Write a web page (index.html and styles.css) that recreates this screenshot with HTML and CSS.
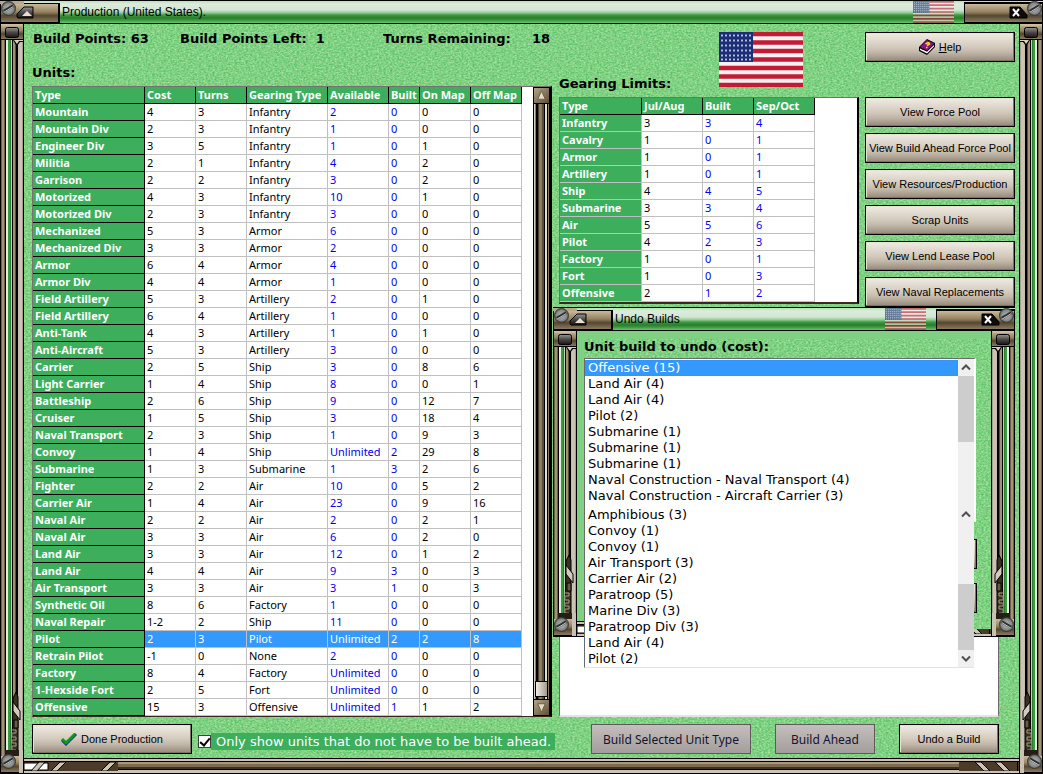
FILE: index.html
```html
<!DOCTYPE html>
<html lang="en">
<head>
  <meta charset="UTF-8">
  <meta name="viewport" content="width=device-width, initial-scale=1">
  <title>Production (United States).</title>
  <link rel="stylesheet" href="styles.css">
</head>
<body>

  <!-- shared shapes -->
  <svg class="defs" aria-hidden="true">
    <defs>
      <filter id="grain" x="0" y="0" width="100%" height="100%" color-interpolation-filters="sRGB">
        <feTurbulence type="fractalNoise" baseFrequency="0.45 0.6" numOctaves="2" seed="4"/>
        <feColorMatrix values="0.5 0 0 0 0.25  0.22 0 0 0 0.71  0.42 0 0 0 0.3  0 0 0 0 1"/>
      </filter>
      <linearGradient id="metal" x1="0" y1="0" x2="0" y2="1">
        <stop offset="0" stop-color="#c9b99c"/>
        <stop offset="0.45" stop-color="#93815f"/>
        <stop offset="0.65" stop-color="#55462f"/>
        <stop offset="1" stop-color="#8a7a5e"/>
      </linearGradient>
      <linearGradient id="knob" x1="0" y1="0" x2="0" y2="1">
        <stop offset="0" stop-color="#9a9794"/>
        <stop offset="0.5" stop-color="#4b4748"/>
        <stop offset="1" stop-color="#171415"/>
      </linearGradient>
      <radialGradient id="steel">
        <stop offset="0" stop-color="#b5b8b8"/>
        <stop offset="0.75" stop-color="#84898a"/>
        <stop offset="1" stop-color="#4a4a45"/>
      </radialGradient>
      <symbol id="screw" viewBox="0 0 16 16">
        <circle cx="8" cy="8" r="7.5" fill="url(#steel)" stroke="#3d3a33"/>
        <path d="M3 11L13 5" stroke="#2d2d2d" stroke-width="3"/>
        <path d="M3 12L13 6" stroke="#d5d8d8"/>
      </symbol>
      <symbol id="cap-left" viewBox="0 0 60 24">
        <rect x="0" y="3" width="60" height="20" fill="#000"/>
        <rect x="1" y="4" width="57" height="18" fill="url(#metal)"/>
        <rect x="0" y="1" width="24" height="3" fill="#b9a98c"/>
        <path d="M17 17V14L24 7H33V18H18Z" fill="url(#knob)" stroke="#000"/>
        <path d="M22 16L27 11L32 16Z" fill="#e8e0cf"/>
        <use href="#screw" x="1" y="1" width="15" height="15"/>
      </symbol>
      <symbol id="cap-right" viewBox="0 0 79 24">
        <rect x="0" y="2" width="79" height="21" fill="#000"/>
        <rect x="1" y="4" width="77" height="18" fill="url(#metal)"/>
        <path d="M46 7H56L63 15V18H46Z" fill="#0d0b0b" stroke="#000"/>
        <path d="M49 9L55 16M55 9L49 16" stroke="#fff" stroke-width="2"/>
        <use href="#screw" x="63" y="1" width="15" height="15"/>
      </symbol>
      <symbol id="shoulder" viewBox="0 0 24 50">
        <rect width="24" height="16" fill="#000"/>
        <rect x="1" width="22" height="15" fill="url(#metal)"/>
        <path d="M1 1H22" stroke="#d3c6ad"/>
        <rect x="5.5" y="3.500" width="13" height="10" rx="2" fill="url(#knob)" stroke="#000"/>
        <path d="M13 16H24V18H20L17 22V50H16V21Z" fill="#000"/>
        <path d="M14 16H23V17H19L17 20Z" fill="#d8cfc2"/>
      </symbol>
      <symbol id="foot" viewBox="0 0 24 94">
        <path d="M13 18L16 12L18 17V32V70H12Z" fill="#3a3021" stroke="#000"/>
        <path d="M13 22L20 31V40L13 31Z" fill="#d3cabd" stroke="#000"/>
        <path d="M14 40H18V48H14Z" fill="#6b5a3f" stroke="#000"/>
        <path d="M12 50H16V53H12V57H16V60H12V63H16V66H12V70H16" fill="none" stroke="#a99a80"/>
        <rect x="5" y="70" width="14" height="6" fill="#241e16"/>
        <rect x="0" y="76" width="24" height="18" fill="#000"/>
        <rect x="1" y="76" width="18" height="16" fill="url(#metal)"/>
        <rect x="19" y="70" width="4" height="23" fill="#c9c0b3"/>
        <use href="#screw" x="1" y="74" width="15" height="15"/>
      </symbol>
      <symbol id="struts" viewBox="0 0 60 9">
        <rect width="60" height="9" fill="#4a3c28"/>
        <path d="M16 0H22L31 9H25ZM36 0H42L51 9H45Z" fill="#cfc5b7" stroke="#000"/>
        <path d="M58.5 0V9" stroke="#000"/>
      </symbol>
      <symbol id="struts-left" viewBox="0 0 94 9">
        <rect width="94" height="9" fill="#4a3c28"/>
        <path d="M0 1H24V8H0Z" fill="#fff" stroke="#000"/>
        <path d="M15 0H21L13 9H7ZM36 0H42L33 9H27ZM86 0H92L83 9H77Z" fill="#cfc5b7" stroke="#000"/>
      </symbol>
      <symbol id="stars" viewBox="0 0 34 30">
        <rect width="34" height="30" fill="#1d2f74"/>
        <path d="M2 3.500H33M2 8.500H33M2 13.500H33M2 18.500H33M2 23.500H33M2 27.500H33" stroke="#aeb8d8" stroke-width="2" stroke-dasharray="2 2"/>
      </symbol>
      <symbol id="flag" viewBox="0 0 84 55" preserveAspectRatio="none">
        <rect width="84" height="55" fill="#f6f1f2"/>
        <path d="M0 2H84M0 10.500H84M0 19H84M0 27.500H84M0 36H84M0 44.500H84M0 53H84" stroke="#c21b33" stroke-width="4.300"/>
        <use href="#stars" width="34" height="30"/>
      </symbol>
    </defs>
  </svg>

  <main class="window main-window">
    <header class="titlebar">
      <svg class="cap-left"><use href="#cap-left"/></svg>
      <span class="title">Production (United States).</span>
      <svg class="title-flag"><use href="#flag"/></svg>
      <svg class="cap-right"><use href="#cap-right"/></svg>
    </header>
    <div class="rail rail-left">
      <svg class="shoulder"><use href="#shoulder"/></svg>
      <svg class="foot"><use href="#foot"/></svg>
    </div>

    <div class="client">
      <svg class="texture" aria-hidden="true"><rect width="100%" height="100%" filter="url(#grain)"/></svg>

      <div class="panes">
        <section class="left-pane">
          <div class="stats">
            <span class="stat-points">Build Points: 63</span>
            <span class="stat-left">Build Points Left:&nbsp; 1</span>
            <span class="stat-turns">Turns Remaining:</span>
            <span>18</span>
          </div>
          <h2>Units:</h2>
          <div class="grid-box units-box">
            <table class="units">
              <thead>
                <tr>
                  <th class="w-type">Type</th><th class="w-mid">Cost</th><th class="w-mid">Turns</th><th class="w-gear">Gearing Type</th>
                  <th class="w-avail">Available</th><th class="w-built">Built</th><th class="w-mid">On Map</th><th class="w-mid">Off Map</th>
                </tr>
              </thead>
              <tbody id="units-body"></tbody>
            </table>
            <div class="scroller">
              <button class="scroll-btn"><svg viewBox="0 0 16 16"><path d="M8 3L12 12H4Z" fill="#e3dac4" stroke="#6b5d43"/></svg></button>
              <div class="scroll-track"><div class="scroll-thumb"></div></div>
              <button class="scroll-btn"><svg viewBox="0 0 16 16"><path d="M8 13L12 4H4Z" fill="#e3dac4" stroke="#6b5d43"/></svg></button>
            </div>
          </div>
        </section>

        <section class="right-pane">
          <div class="right-top">
            <div class="gearing">
              <div class="gearing-head">
                <h2>Gearing Limits:</h2>
                <svg class="big-flag"><use href="#flag"/></svg>
              </div>
              <div class="grid-box gearing-box">
                <table class="limits">
                  <thead>
                    <tr><th class="w-name">Type</th><th class="w-month">Jul/Aug</th><th class="w-mid">Built</th><th class="w-month">Sep/Oct</th></tr>
                  </thead>
                  <tbody id="limits-body"></tbody>
                </table>
              </div>
            </div>
            <nav class="actions">
              <button class="btn help-btn">
                <svg class="book" viewBox="0 0 16 16">
                  <path d="M0 8L8 0L16 4V8L8 16L0 12Z" fill="#000"/>
                  <path d="M1 8L8 1L15 4.500L8 11.500Z" fill="#8b128b"/>
                  <path d="M1 9.500L8 12.800L15 6V7.500L8 14.500L1 11Z" fill="#fff"/>
                  <path d="M6.500 5Q10 2.500 10.500 5L8 6.500M7 8.500H8.500" fill="none" stroke="#ffe600" stroke-width="1.500"/>
                </svg>
                <span><u>H</u>elp</span>
              </button>
              <button class="btn">View Force Pool</button>
              <button class="btn">View Build Ahead Force Pool</button>
              <button class="btn">View Resources/Production</button>
              <button class="btn">Scrap Units</button>
              <button class="btn">View Lend Lease Pool</button>
              <button class="btn">View Naval Replacements</button>
            </nav>
          </div>
          <div class="memo"></div>
        </section>
      </div>

      <footer class="bottom-bar">
        <button class="btn done-btn">
          <svg class="tick" viewBox="0 0 16 16">
            <path d="M1 9L5 13L15 3" fill="none" stroke="#1414c8" stroke-width="3"/>
            <path d="M1 8L5 12L14 3" fill="none" stroke="#0c9a14" stroke-width="3"/>
          </svg>
          <span>Done Production</span>
        </button>
        <label class="ahead-only"><input type="checkbox" checked><span>Only show units that do not have to be built ahead.</span></label>
        <button class="btn build-btn" disabled>Build Selected Unit Type</button>
        <button class="btn ahead-btn" disabled>Build Ahead</button>
        <button class="btn undo-btn">Undo a Build</button>
      </footer>

      <!-- floating Undo Builds window -->
      <section class="window undo-window">
        <header class="titlebar">
          <svg class="cap-left"><use href="#cap-left"/></svg>
          <span class="title">Undo Builds</span>
          <svg class="title-flag"><use href="#flag"/></svg>
          <svg class="cap-right"><use href="#cap-right"/></svg>
        </header>
        <div class="rail rail-left">
          <svg class="shoulder"><use href="#shoulder"/></svg>
          <svg class="foot"><use href="#foot"/></svg>
        </div>
        <div class="client undo-client">
          <svg class="texture" aria-hidden="true"><rect width="100%" height="100%" filter="url(#grain)"/></svg>
          <h2><label for="undo-list">Unit build to undo (cost):</label></h2>
          <div class="list-box">
            <select id="undo-list" size="10">
              <option selected>Offensive (15)</option>
              <option>Land Air (4)</option>
              <option>Land Air (4)</option>
              <option>Pilot (2)</option>
              <option>Submarine (1)</option>
              <option>Submarine (1)</option>
              <option>Submarine (1)</option>
              <option>Naval Construction - Naval Transport (4)</option>
              <option>Naval Construction - Aircraft Carrier (3)</option>
            </select>
            <div class="list-scroll">
              <svg viewBox="0 0 16 16"><path d="M4 10L8 6L12 10" fill="none" stroke="#505050" stroke-width="2"/></svg>
              <div class="list-thumb"></div>
            </div>
          </div>
          <button class="btn"></button>
          <button class="btn"></button>
        </div>
        <div class="rail rail-right">
          <svg class="shoulder"><use href="#shoulder"/></svg>
          <svg class="foot"><use href="#foot"/></svg>
        </div>
        <div class="sill">
          <svg class="struts-left"><use href="#struts-left"/></svg>
          <svg class="struts"><use href="#struts"/></svg>
        </div>

        <div class="list-box list-more">
          <select size="10" aria-labelledby="undo-list">
            <option>Amphibious (3)</option>
            <option>Convoy (1)</option>
            <option>Convoy (1)</option>
            <option>Air Transport (3)</option>
            <option>Carrier Air (2)</option>
            <option>Paratroop (5)</option>
            <option>Marine Div (3)</option>
            <option>Paratroop Div (3)</option>
            <option>Land Air (4)</option>
            <option>Pilot (2)</option>
          </select>
          <div class="list-scroll">
            <svg viewBox="0 0 16 16"><path d="M4 10L8 6L12 10" fill="none" stroke="#505050" stroke-width="2"/></svg>
            <div class="list-gap"></div>
            <div class="list-thumb"></div>
            <svg viewBox="0 0 16 16"><path d="M4 6L8 10L12 6" fill="none" stroke="#505050" stroke-width="2"/></svg>
          </div>
        </div>
      </section>
    </div>

    <div class="rail rail-right">
      <svg class="shoulder"><use href="#shoulder"/></svg>
      <svg class="foot"><use href="#foot"/></svg>
    </div>
    <div class="sill">
      <svg class="struts-left"><use href="#struts-left"/></svg>
      <svg class="struts"><use href="#struts"/></svg>
    </div>
  </main>

  <script>
    // type, cost, turns, gearing type, available, built, on map, off map
    const units = [
      ["Mountain", 4, 3, "Infantry", 2, 0, 0, 0],
      ["Mountain Div", 2, 3, "Infantry", 1, 0, 0, 0],
      ["Engineer Div", 3, 5, "Infantry", 1, 0, 1, 0],
      ["Militia", 2, 1, "Infantry", 4, 0, 2, 0],
      ["Garrison", 2, 2, "Infantry", 3, 0, 2, 0],
      ["Motorized", 4, 3, "Infantry", 10, 0, 1, 0],
      ["Motorized Div", 2, 3, "Infantry", 3, 0, 0, 0],
      ["Mechanized", 5, 3, "Armor", 6, 0, 0, 0],
      ["Mechanized Div", 3, 3, "Armor", 2, 0, 0, 0],
      ["Armor", 6, 4, "Armor", 4, 0, 0, 0],
      ["Armor Div", 4, 4, "Armor", 1, 0, 0, 0],
      ["Field Artillery", 5, 3, "Artillery", 2, 0, 1, 0],
      ["Field Artillery", 6, 4, "Artillery", 1, 0, 0, 0],
      ["Anti-Tank", 4, 3, "Artillery", 1, 0, 1, 0],
      ["Anti-Aircraft", 5, 3, "Artillery", 3, 0, 0, 0],
      ["Carrier", 2, 5, "Ship", 3, 0, 8, 6],
      ["Light Carrier", 1, 4, "Ship", 8, 0, 0, 1],
      ["Battleship", 2, 6, "Ship", 9, 0, 12, 7],
      ["Cruiser", 1, 5, "Ship", 3, 0, 18, 4],
      ["Naval Transport", 2, 3, "Ship", 1, 0, 9, 3],
      ["Convoy", 1, 4, "Ship", "Unlimited", 2, 29, 8],
      ["Submarine", 1, 3, "Submarine", 1, 3, 2, 6],
      ["Fighter", 2, 2, "Air", 10, 0, 5, 2],
      ["Carrier Air", 1, 4, "Air", 23, 0, 9, 16],
      ["Naval Air", 2, 2, "Air", 2, 0, 2, 1],
      ["Naval Air", 3, 3, "Air", 6, 0, 2, 0],
      ["Land Air", 3, 3, "Air", 12, 0, 1, 2],
      ["Land Air", 4, 4, "Air", 9, 3, 0, 3],
      ["Air Transport", 3, 3, "Air", 3, 1, 0, 3],
      ["Synthetic Oil", 8, 6, "Factory", 1, 0, 0, 0],
      ["Naval Repair", "1-2", 2, "Ship", 11, 0, 0, 0],
      ["Pilot", 2, 3, "Pilot", "Unlimited", 2, 2, 8],
      ["Retrain Pilot", -1, 0, "None", 2, 0, 0, 0],
      ["Factory", 8, 4, "Factory", "Unlimited", 0, 0, 0],
      ["1-Hexside Fort", 2, 5, "Fort", "Unlimited", 0, 0, 0],
      ["Offensive", 15, 3, "Offensive", "Unlimited", 1, 1, 2]
    ];

    // type, this turn, built, next turn
    const limits = [
      ["Infantry", 3, 3, 4],
      ["Cavalry", 1, 0, 1],
      ["Armor", 1, 0, 1],
      ["Artillery", 1, 0, 1],
      ["Ship", 4, 4, 5],
      ["Submarine", 3, 3, 4],
      ["Air", 5, 5, 6],
      ["Pilot", 4, 2, 3],
      ["Factory", 1, 0, 1],
      ["Fort", 1, 0, 3],
      ["Offensive", 2, 1, 2]
    ];

    function fill(id, rows, blueCols, selected) {
      document.getElementById(id).innerHTML = rows.map((row, r) => {
        const cells = row.map((value, c) => {
          if (c === 0) return `<th scope="row">${value}</th>`;
          return `<td${blueCols.includes(c) ? ' class="blue"' : ''}>${value}</td>`;
        });
        return `<tr${r === selected ? ' class="selected"' : ''}>${cells.join("")}</tr>`;
      }).join("");
    }

    fill("units-body", units, [4, 5], 31);
    fill("limits-body", limits, [2, 3], -1);
  </script>

</body>
</html>
```

FILE: styles.css
```css
* {
  box-sizing: border-box;
}

body {
  margin: 0;
  font-family: "DejaVu Sans", Verdana, sans-serif;
  font-size: 13px;
  color: #000;
  background: #7fd083;
}

.defs {
  position: absolute;
  width: 0;
  height: 0;
}

/* window frame */
.window {
  display: grid;
  grid-template-columns: 24px 1fr 24px;
  grid-template-rows: 24px 1fr 16px;
}

.main-window {
  min-height: 100vh;
}

.titlebar {
  grid-column: 1 / 4;
  display: flex;
  align-items: flex-start;
  height: 24px;
  border-top: 1px solid #000;
  border-bottom: 1px solid #000;
  background: linear-gradient(#b5e3b7 0, #dcebdc 3px, #d3e6d3 9px, #8bc98d 12px, #3f9a42 14px, #2c7b2f 17px, #46a549 20px, #6cc870 22px);
}

.titlebar svg {
  display: block;
  flex: none;
}

.cap-left {
  width: 60px;
  height: 24px;
  margin-top: -1px;
}

.cap-right {
  width: 79px;
  height: 24px;
  margin-top: -1px;
}

.title {
  flex: 1;
  padding-left: 2px;
  font: 12px/22px "Liberation Sans", Arial, sans-serif;
}

.title-flag {
  width: 41px;
  height: 22px;
  margin-right: 10px;
  opacity: 0.6;
}

.rail {
  position: relative;
  grid-row: 2 / 4;
  background: linear-gradient(to right,
    #000 0 1px, #6e5f47 1px 2px, #a39372 2px 4px, #6e5f47 4px 5px, #000 5px 6px,
    #e3efe3 6px 8px, #3a9a3e 8px 10px, #2b7c2f 10px 11px, #b7d8b3 11px 12px, #000 12px 13px,
    #a39372 13px 15px, #5b4d38 15px 16px, #000 16px 18px, #c5bcb0 18px 19px, #cbc2b6 19px 22px, #a79c8d 22px 23px, #000 23px);
}

.rail-left {
  grid-column: 1;
}

.rail-right {
  grid-column: 3;
  transform: scaleX(-1);
}

.rail svg {
  position: absolute;
  left: 0;
  width: 24px;
}

.shoulder {
  top: 0;
  height: 50px;
}

.foot {
  bottom: 0;
  height: 94px;
}

.sill {
  grid-column: 2;
  grid-row: 3;
  display: flex;
  justify-content: space-between;
  align-items: center;
  background: linear-gradient(#000 0 1px, #cbc2b6 1px 3px, #000 3px 4px, #a8987b 4px 6px, #7d6c50 6px 9px, #3c301f 9px 11px, #000 11px 12px, #cbc2b6 12px 15px, #000 15px);
}

.struts {
  width: 60px;
  height: 9px;
}

.struts-left {
  width: 94px;
  height: 9px;
}

.client {
  position: relative;
  grid-column: 2;
  grid-row: 2;
  display: flex;
  flex-direction: column;
  background: #7fd083;
}

.texture {
  position: absolute;
  width: 100%;
  height: 100%;
}

/* production content */
.panes {
  position: relative;
  flex: 1;
  display: flex;
  gap: 7px;
  padding: 0 4px 0 8px;
}

.left-pane {
  width: 520px;
}

.right-pane {
  flex: 1;
  display: flex;
  flex-direction: column;
}

.stats {
  display: flex;
  height: 30px;
  padding-left: 1px;
  font-weight: bold;
  line-height: 30px;
}

.stat-points {
  width: 147px;
}

.stat-left {
  width: 203px;
}

.stat-turns {
  width: 149px;
}

h2 {
  margin: 0;
  font-size: 13px;
  line-height: 16px;
}

.left-pane h2 {
  margin: 11px 0 5px;
}

.grid-box {
  background: #fff;
  border: 1px solid #7a6f70;
  border-right: 2px solid #000;
  border-bottom: 2px solid #3a2820;
}

.units-box {
  display: flex;
  justify-content: space-between;
  border-bottom-width: 1px;
}

table {
  border-spacing: 0;
  table-layout: fixed;
  font: 11px/16px "Noto Sans", Tahoma, sans-serif;
}

.units {
  width: 489px;
}

.limits {
  width: 255px;
}

th,
td {
  height: 17px;
  padding: 0 0 0 2px;
  border-right: 1px solid #c0c0c0;
  border-bottom: 1px solid #c0c0c0;
  text-align: left;
  white-space: nowrap;
}

th {
  background: #3cae5c;
  color: #fff;
}

thead th,
.units th {
  border-color: #000;
}

.w-type { width: 112px; }
.w-mid { width: 51px; }
.w-gear { width: 81px; }
.w-avail { width: 61px; }
.w-built { width: 31px; }
.w-name { width: 82px; }
.w-month { width: 61px; }

.blue {
  color: #0000f0;
}

.selected td {
  background: #3399ff;
  color: #fff;
}

.scroller {
  width: 17px;
  display: flex;
  flex-direction: column;
}

.scroll-btn {
  height: 17px;
  padding: 0;
  border: 1px solid #000;
  background: linear-gradient(135deg, #b3a588, #5d4e36);
}

.scroll-btn svg {
  display: block;
  width: 15px;
  height: 15px;
}

.scroll-track {
  flex: 1;
  display: flex;
  flex-direction: column;
  justify-content: flex-end;
  background: linear-gradient(to right, #000 0 1px, #d8cfc0 1px 2px, #8b7b60 2px 3px, #000 3px 5px, #4a3e2c 5px 6px, #8b7b60 6px 9px, #5a4c36 9px 11px, #000 11px 12px, #e3ddd2 12px 14px, #000 14px 15px, #8b7b60 15px 16px, #000 16px);
}

.scroll-thumb {
  height: 16px;
  margin: 0 2px 2px;
  border: 1px solid #000;
  background: linear-gradient(to right, #f0ece4, #a49a8c);
}

.right-top {
  display: flex;
  gap: 6px;
}

.gearing {
  flex: 1;
}

.gearing-head {
  display: flex;
  align-items: flex-end;
  height: 73px;
}

.gearing-head h2 {
  width: 160px;
  margin-bottom: 5px;
}

.big-flag {
  width: 84px;
  height: 55px;
  margin-bottom: 10px;
}

.actions {
  width: 150px;
  display: flex;
  flex-direction: column;
  gap: 6px;
  padding-top: 8px;
}

.btn {
  display: flex;
  align-items: center;
  justify-content: center;
  height: 30px;
  padding: 0;
  border: 1px solid #000;
  background: linear-gradient(#f0ebe3, #d3cabd 50%, #c0b6a8 70%, #948877);
  box-shadow: inset -1px -1px #7d7263, inset 1px 1px #e8e1d6;
  color: #000;
  font: 11px "Liberation Sans", Arial, sans-serif;
  white-space: nowrap;
}

.btn:disabled {
  border: 1px solid #5d5b5b;
  background: linear-gradient(#c4bfbd, #a39e9c);
  box-shadow: none;
  color: #14142a;
  font: 12px "Noto Sans", Tahoma, sans-serif;
}

.help-btn {
  gap: 4px;
  margin-bottom: 29px;
}

.book,
.tick {
  width: 16px;
  height: 16px;
}

.memo {
  flex: 1;
  margin: 100px 16px 0 0;
  border: 1px solid #6b6b6b;
  border-bottom: 2px solid #e3e3e3;
  background: #fff;
}

.bottom-bar {
  position: relative;
  display: flex;
  height: 41px;
  padding: 7px 20px 4px 8px;
}

.done-btn {
  width: 160px;
  gap: 4px;
}

.ahead-only {
  display: flex;
  align-items: center;
  margin: 4px auto 0 6px;
  color: #fff;
}

.ahead-only span {
  padding: 0 4px 0 5px;
  background: #3cae5c;
  line-height: 17px;
  white-space: nowrap;
}

.ahead-only input {
  appearance: none;
  width: 13px;
  height: 13px;
  margin: 0;
  border: 1px solid #404040;
  background: #fff;
}

.ahead-only input:checked::before {
  content: "";
  display: block;
  width: 4px;
  height: 8px;
  margin: 0 0 0 3px;
  border: solid #000;
  border-width: 0 2px 2px 0;
  transform: rotate(40deg);
}

.build-btn {
  width: 160px;
  margin-right: 24px;
}

.ahead-btn {
  width: 100px;
  margin-right: 24px;
}

.undo-btn {
  width: 100px;
}

/* undo builds */
.undo-window {
  position: absolute;
  top: 283px;
  right: 4px;
  width: 462px;
  height: 330px;
}

.undo-client {
  padding: 8px 0 0 7px;
}

.undo-client h2 {
  position: relative;
  margin: 0 0 3px;
}

.list-box {
  position: relative;
  display: flex;
  width: 392px;
  height: 164px;
  border: 1px solid #6b6b6b;
  border-right: 2px solid #fff;
  border-bottom: 1px solid #e3e3e3;
  background: #fff;
}

.undo-client .btn {
  position: relative;
  width: 75px;
  margin: 17px 0 -3px 318px;
}

.list-box select {
  flex: 1;
  margin: 0;
  padding: 1px 0 0;
  border: 0;
  outline: none;
  border-radius: 0;
  background: #fff;
  color: #000;
  font: 13px/16px "DejaVu Sans", Verdana, sans-serif;
  overflow: hidden;
  scrollbar-width: none;
}

.list-box option {
  height: 16px;
  min-height: 16px;
  padding: 0 0 0 3px;
  line-height: 16px;
}

.list-box option:checked {
  outline: 1px dotted #d07000;
  outline-offset: -1px;
  background: #3399ff linear-gradient(#3399ff, #3399ff);
  color: #fff;
}

.list-scroll {
  width: 16px;
  display: flex;
  flex-direction: column;
  background: #f0f0f0;
}

.list-scroll svg {
  width: 16px;
  height: 17px;
}

.list-thumb {
  height: 66px;
  background: #cdcdcd;
}

.list-more {
  position: absolute;
  top: 199px;
  left: 31px;
  width: 390px;
  height: 162px;
  border-top: 0;
  border-right: 0;
}

.list-gap {
  flex: 1;
}
```
